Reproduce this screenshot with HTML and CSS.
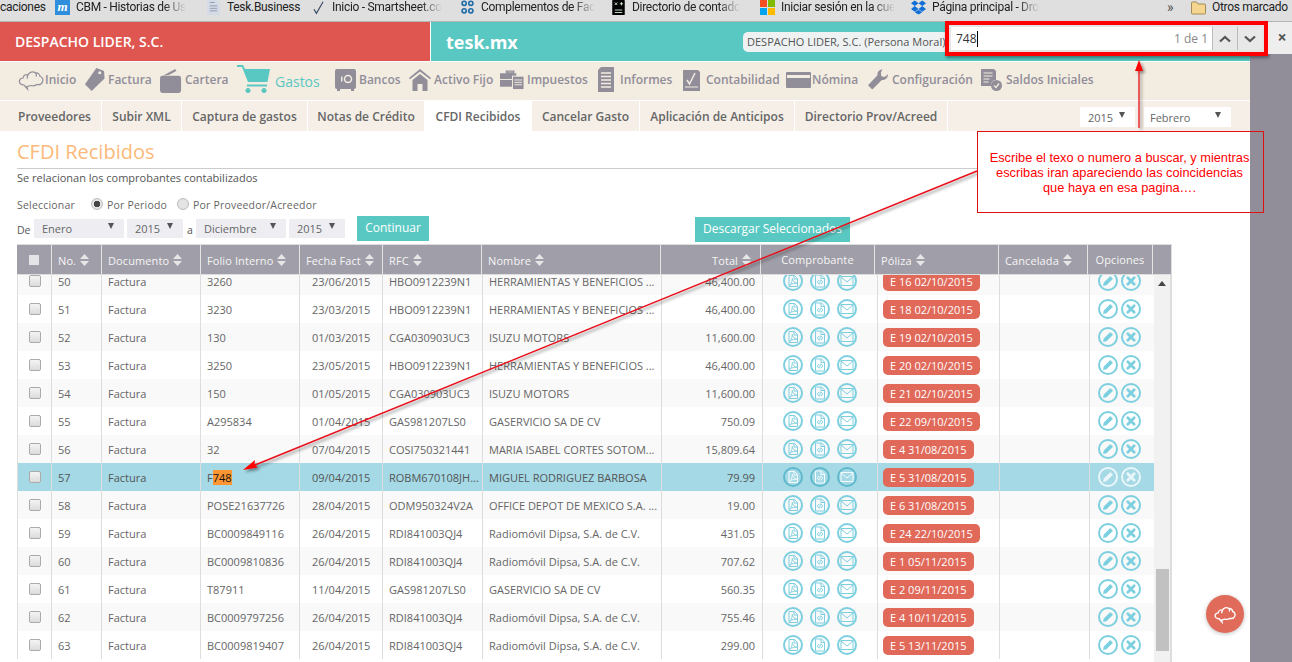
FILE: index.html
```html
<!DOCTYPE html>
<html lang="es">
<head>
<meta charset="utf-8">
<title>CFDI Recibidos</title>
<link rel="stylesheet" href="styles.css">
</head>
<body>
<svg class="defs" width="0" height="0" aria-hidden="true">
  <symbol id="i-pdf" viewBox="0 0 20 20"><circle cx="10" cy="10" r="9" fill="none" stroke="currentColor" stroke-width="2"/><path class="inner" d="M6 4.500h5.500l3 3V15.500H6z M11 4.500V8h3.500" fill="none"/><path class="inner" d="M6.500 14.500C9 12 9.500 8.500 9.300 7.500 10 10 11.500 12 14 12.200 11.500 12 8.500 12.500 6.500 14.500z" fill="none" stroke-width=".9"/></symbol>
  <symbol id="i-xml" viewBox="0 0 20 20"><circle cx="10" cy="10" r="9" fill="none" stroke="currentColor" stroke-width="2"/><path class="inner" d="M5.500 4h6l3 3v9h-9z M11 4v3.500h3.500" fill="none"/><path class="inner" d="M8.800 9 7.300 11l1.500 2M11.200 9l1.500 2-1.500 2M10.500 8.500l-1 5" fill="none" stroke-width=".9"/></symbol>
  <symbol id="i-mail" viewBox="0 0 20 20"><circle cx="10" cy="10" r="9" fill="none" stroke="currentColor" stroke-width="2"/><rect class="inner" x="4" y="5.500" width="12" height="9" fill="none"/><path class="inner" d="M4 6l6 5 6-5" fill="none"/></symbol>
  <symbol id="i-edit" viewBox="0 0 20 20"><circle cx="10" cy="10" r="9" fill="none" stroke="currentColor" stroke-width="2"/><path d="M5 15l.8-3.500 6.500-6.500 2.700 2.700-6.500 6.500z" fill="currentColor"/></symbol>
  <symbol id="i-x" viewBox="0 0 20 20"><circle cx="10" cy="10" r="9" fill="none" stroke="currentColor" stroke-width="2"/><path d="M6.800 6.800l6.400 6.400M13.200 6.800l-6.400 6.400" fill="none" stroke="currentColor" stroke-width="2.800" stroke-linecap="round"/></symbol>
  <symbol id="i-sort" viewBox="0 0 9 12"><path d="M4.500 0 9 5H0zM0 7h9l-4.500 5z" fill="currentColor"/></symbol>
  <symbol id="i-cloud" viewBox="0 0 26 22"><path d="M6 16C2.500 16 1 14 1.500 11.500 2 9.500 4 9 5 9 5.500 6 8 5 10 6 11 3 15 2 17.500 4 19.500 3.500 22 5 22 7.500 24.500 8 25.500 10.500 24.500 13 23.500 15.500 21 16 19 15.500 17 17 15 17 13 16.500L9 17.500 9.500 20 6 16zM10 6C9 7.500 9 8.500 9.500 9.500M17.500 4C18.500 5 18.500 6.500 18 7.500" fill="none" stroke="currentColor" stroke-width="1.200"/></symbol>
  <symbol id="i-tag" viewBox="0 0 22 26"><path d="M13 1l8 3 .5 8L8 25 1 18z" fill="currentColor"/><circle cx="16.500" cy="6" r="1.600" fill="#f3ece1"/></symbol>
  <symbol id="i-wallet" viewBox="0 0 23 27"><path d="M3 8 16 1l2 5z" fill="currentColor"/><path d="M6 9 17 3l2 4z" fill="#f3ece1"/><rect x="0" y="8" width="22" height="18" rx="2.500" fill="currentColor"/></symbol>
  <symbol id="i-cart" viewBox="0 0 33 30"><path d="M0 1h6l2 4h25l-2.500 13H11L5 3H0z" fill="currentColor"/><path d="M10 20.500h20v2H10z" fill="currentColor"/><circle cx="11" cy="26.500" r="2.500" fill="currentColor"/><circle cx="27" cy="26.500" r="2.500" fill="currentColor"/></symbol>
  <symbol id="i-safe" viewBox="0 0 21 22"><rect width="21" height="20" rx="2" fill="currentColor"/><path d="M2 20h3v2H2zM16 20h3v2h-3z" fill="currentColor"/><circle cx="13" cy="10" r="3.500" fill="none" stroke="#f3ece1" stroke-width="1.500"/><path d="M6 7.500h1.500v5H6z" fill="#f3ece1"/></symbol>
  <symbol id="i-home" viewBox="0 0 22 22"><path d="M11 0 22 9l-1 1.200L11 2.400 1 10.200 0 9z" fill="currentColor"/><path d="M3.500 11 11 5l7.500 6v11h-5v-7h-5v7h-5z" fill="currentColor"/></symbol>
  <symbol id="i-brief" viewBox="0 0 25 21"><path d="M7 3h7v2H7zM6 1h9v3h-1.500V2.500h-6V4H6z" fill="currentColor"/><rect y="4" width="17" height="14" fill="currentColor"/><path d="M0 10h17v1H0z" fill="#f3ece1"/><rect x="13" y="7" width="12" height="14" fill="currentColor" stroke="#f3ece1"/><path d="M15 11h8M15 13.500h8M15 16h8" stroke="#f3ece1"/></symbol>
  <symbol id="i-doc" viewBox="0 0 16 25"><path d="M3 0h13v25H0V3z" fill="currentColor"/><path d="M3 6h10M3 9.500h10M3 13h10M3 16.500h10M3 20h10" stroke="#f3ece1" stroke-width="1.300"/></symbol>
  <symbol id="i-acc" viewBox="0 0 17 22"><path d="M0 1h15l2 2v19H0z" fill="currentColor"/><path d="M4 11l2.500 4L12 4" fill="none" stroke="#f3ece1" stroke-width="1.500"/><path d="M2 18h13" stroke="#f3ece1"/></symbol>
  <symbol id="i-card" viewBox="0 0 25 16"><rect width="25" height="16" rx="1" fill="currentColor"/><path d="M1 3h23v3H1z" fill="#f3ece1"/></symbol>
  <symbol id="i-wrench" viewBox="0 0 21 21"><path d="M15 0c-3 0-5.500 2.500-5 6L0 16.500 4.500 21 14.500 11c3.500.5 6.500-2 6.500-6l-3.500 3L14 7 13.500 3.500z" fill="currentColor"/></symbol>
  <symbol id="i-saldo" viewBox="0 0 21 22"><path d="M0 0h13l2 2v9c-3 0-5 2-5 6H0z" fill="currentColor"/><path d="M2.500 4h9M2.500 7h9M2.500 10h6M2.500 13h5" stroke="#f3ece1"/><circle cx="15.500" cy="16.500" r="5.500" fill="currentColor"/><path d="M13 16.500l2 2 3-4" fill="none" stroke="#f3ece1" stroke-width="1.300"/></symbol>
  <symbol id="i-chat" viewBox="0 0 26 22"><path d="M6 16C2.500 16 1 14 1.500 11.500 2 9.500 4 9 5 9 5.500 6 8 5 10 6 11 3 15 2 17.500 4 19.500 3.500 22 5 22 7.500 24.500 8 25.500 10.500 24.500 13 23.500 15.500 21 16 19 15.500 17 17 15 17 13 16.500L9 17.500 9.500 20 6 16zM10 6C9 7.500 9 8.500 9.500 9.500M17.500 4C18.500 5 18.500 6.500 18 7.500" fill="none" stroke="currentColor" stroke-width="1.600"/></symbol>
</svg>

<div class="bookmarks">
  <div class="bm bm-first"><span class="bm-end">caciones</span></div>
  <div class="bm"><span class="bi-m">m</span><span class="bm-text">CBM - Historias de Us</span></div>
  <div class="bm"><svg class="bsvg" viewBox="0 0 15 18"><path d="M0 0h11l4 4v14H0z" fill="#d5dbe6"/><path d="M3 3h6M3 7h9M3 10h9M3 13h9" stroke="#8794aa"/></svg><span class="bm-end">Tesk.Business</span></div>
  <div class="bm"><svg class="bsvg" viewBox="0 0 15 18"><path d="M2 11l3 5L13 2" fill="none" stroke="#33475f" stroke-width="1.300"/></svg><span class="bm-text">Inicio - Smartsheet.co</span></div>
  <div class="bm"><svg class="bsvg" viewBox="0 0 15 18"><g fill="none" stroke="#1f6ea8" stroke-width="2"><circle cx="3.500" cy="4" r="2.500"/><circle cx="11.500" cy="4" r="2.500"/><circle cx="3.500" cy="13" r="2.500"/><circle cx="11.500" cy="13" r="2.500"/></g></svg><span class="bm-text">Complementos de Fac</span></div>
  <div class="bm"><svg class="bsvg" viewBox="0 0 15 18"><rect width="15" height="18" rx="1" fill="#000"/><path d="M3 3l3 3M6 3 3 6M9 4.500h4M11 2.500v4M3 12h9M3 15h9" stroke="#e8ffe8"/></svg><span class="bm-text">Directorio de contado</span></div>
  <div class="bm"><svg class="bsvg" viewBox="0 0 15 15"><path d="M0 0h7v7H0z" fill="#f25022"/><path d="M8 0h7v7H8z" fill="#7fba00"/><path d="M0 8h7v7H0z" fill="#00a4ef"/><path d="M8 8h7v7H8z" fill="#ffb900"/></svg><span class="bm-text">Iniciar sesión en la cue</span></div>
  <div class="bm"><svg class="bsvg" viewBox="0 0 16 15"><path d="M4 0 8 3 4 6 0 3zM12 0l4 3-4 3-4-3zM4 6l4 3-4 3-4-3zM12 6l4 3-4 3-4-3zM4 12.500 8 10l4 2.500L8 15z" fill="#0f6fd6"/></svg><span class="bm-text">Página principal - Dro</span></div>
  <div class="bm bm-more">»</div>
  <div class="bm bm-folder"><svg class="bsvg" viewBox="0 0 15 14"><path d="M.5 2.500a1 1 0 0 1 1-1h4l1.500 2h6.500a1 1 0 0 1 1 1v8a1 1 0 0 1-1 1h-12a1 1 0 0 1-1-1z" fill="#f6d68f" stroke="#a58b57"/></svg><span class="bm-end">Otros marcado</span></div>
</div>

<div class="viewport">
  <main class="app">
    <header class="brand">
      <div class="brand-firm">DESPACHO LIDER, S.C.</div>
      <div class="brand-tesk">
        <span class="logo">tesk.mx</span>
        <span class="pill">DESPACHO LIDER, S.C. (Persona Moral)</span>
      </div>
    </header>

    <nav class="nav">
      <a class="nav-item nav-tight"><svg class="ni ni-cloud"><use href="#i-cloud"/></svg>Inicio</a>
      <a class="nav-item"><svg class="ni ni-tag"><use href="#i-tag"/></svg>Factura</a>
      <a class="nav-item"><svg class="ni ni-wallet"><use href="#i-wallet"/></svg>Cartera</a>
      <a class="nav-item nav-active"><svg class="ni ni-cart"><use href="#i-cart"/></svg>Gastos</a>
      <a class="nav-item"><svg class="ni ni-safe"><use href="#i-safe"/></svg>Bancos</a>
      <a class="nav-item"><svg class="ni ni-home"><use href="#i-home"/></svg>Activo Fijo</a>
      <a class="nav-item"><svg class="ni ni-brief"><use href="#i-brief"/></svg>Impuestos</a>
      <a class="nav-item"><svg class="ni ni-doc"><use href="#i-doc"/></svg>Informes</a>
      <a class="nav-item"><svg class="ni ni-acc"><use href="#i-acc"/></svg>Contabilidad</a>
      <a class="nav-item nav-tight"><svg class="ni ni-card"><use href="#i-card"/></svg>Nómina</a>
      <a class="nav-item nav-wide"><svg class="ni ni-wrench"><use href="#i-wrench"/></svg>Configuración</a>
      <a class="nav-item nav-wide"><svg class="ni ni-saldo"><use href="#i-saldo"/></svg>Saldos Iniciales</a>
    </nav>

    <div class="subnav">
      <a class="tab">Proveedores</a>
      <a class="tab">Subir XML</a>
      <a class="tab">Captura de gastos</a>
      <a class="tab">Notas de Crédito</a>
      <a class="tab tab-on">CFDI Recibidos</a>
      <a class="tab">Cancelar Gasto</a>
      <a class="tab">Aplicación de Anticipos</a>
      <a class="tab">Directorio Prov/Acreed</a>
      <div class="period">
        <span class="sel sel-y">2015<i class="caret"></i></span>
        <span class="sel sel-m">Febrero<i class="caret"></i></span>
      </div>
    </div>

    <section class="content">
      <h1 class="title">CFDI Recibidos</h1>
      <p class="lead">Se relacionan los comprobantes contabilizados</p>
      <div class="radios">
        <span class="radios-label">Seleccionar</span>
        <i class="radio radio-on"></i><span class="radio-text">Por Periodo</span>
        <i class="radio"></i><span>Por Proveedor/Acreedor</span>
      </div>
      <div class="filters">
        <span class="f-de">De</span>
        <span class="sel f-month">Enero<i class="caret"></i></span>
        <span class="sel f-year">2015<i class="caret"></i></span>
        <span class="f-a">a</span>
        <span class="sel f-month">Diciembre<i class="caret"></i></span>
        <span class="sel f-year">2015<i class="caret"></i></span>
        <a class="btn btn-go">Continuar</a>
        <a class="btn btn-dl">Descargar Seleccionados</a>
      </div>

      <div class="table">
        <div class="thead">
          <span class="cell-chk"><i class="chk chk-head"></i></span>
          <span>No.<svg class="sort"><use href="#i-sort"/></svg></span>
          <span>Documento<svg class="sort"><use href="#i-sort"/></svg></span>
          <span>Folio Interno<svg class="sort"><use href="#i-sort"/></svg></span>
          <span>Fecha Fact<svg class="sort"><use href="#i-sort"/></svg></span>
          <span>RFC<svg class="sort"><use href="#i-sort"/></svg></span>
          <span>Nombre<svg class="sort"><use href="#i-sort"/></svg></span>
          <span class="th-end">Total<svg class="sort"><use href="#i-sort"/></svg></span>
          <span class="th-mid">Comprobante</span>
          <span>Póliza<svg class="sort"><use href="#i-sort"/></svg></span>
          <span>Cancelada<svg class="sort"><use href="#i-sort"/></svg></span>
          <span class="th-mid">Opciones</span>
          <span></span>
        </div>
        <div class="tbody-wrap">
          <div class="tbody">
            <div class="row"><span class="cell-chk"><i class="chk"></i></span><span>50</span><span>Factura</span><span>3260</span><span class="date">23/06/2015</span><span>HBO0912239N1</span><span>HERRAMIENTAS Y BENEFICIOS ...</span><span class="num">46,400.00</span><span class="acts"><svg class="ai"><use href="#i-pdf"/></svg><svg class="ai"><use href="#i-xml"/></svg><svg class="ai"><use href="#i-mail"/></svg></span><span><b class="badge">E 16 02/10/2015</b></span><span></span><span class="opts"><svg class="ai"><use href="#i-edit"/></svg><svg class="ai"><use href="#i-x"/></svg></span></div>
            <div class="row"><span class="cell-chk"><i class="chk"></i></span><span>51</span><span>Factura</span><span>3230</span><span class="date">23/03/2015</span><span>HBO0912239N1</span><span>HERRAMIENTAS Y BENEFICIOS ...</span><span class="num">46,400.00</span><span class="acts"><svg class="ai"><use href="#i-pdf"/></svg><svg class="ai"><use href="#i-xml"/></svg><svg class="ai"><use href="#i-mail"/></svg></span><span><b class="badge">E 18 02/10/2015</b></span><span></span><span class="opts"><svg class="ai"><use href="#i-edit"/></svg><svg class="ai"><use href="#i-x"/></svg></span></div>
            <div class="row"><span class="cell-chk"><i class="chk"></i></span><span>52</span><span>Factura</span><span>130</span><span class="date">01/03/2015</span><span>CGA030903UC3</span><span>ISUZU MOTORS</span><span class="num">11,600.00</span><span class="acts"><svg class="ai"><use href="#i-pdf"/></svg><svg class="ai"><use href="#i-xml"/></svg><svg class="ai"><use href="#i-mail"/></svg></span><span><b class="badge">E 19 02/10/2015</b></span><span></span><span class="opts"><svg class="ai"><use href="#i-edit"/></svg><svg class="ai"><use href="#i-x"/></svg></span></div>
            <div class="row"><span class="cell-chk"><i class="chk"></i></span><span>53</span><span>Factura</span><span>3250</span><span class="date">23/05/2015</span><span>HBO0912239N1</span><span>HERRAMIENTAS Y BENEFICIOS ...</span><span class="num">46,400.00</span><span class="acts"><svg class="ai"><use href="#i-pdf"/></svg><svg class="ai"><use href="#i-xml"/></svg><svg class="ai"><use href="#i-mail"/></svg></span><span><b class="badge">E 20 02/10/2015</b></span><span></span><span class="opts"><svg class="ai"><use href="#i-edit"/></svg><svg class="ai"><use href="#i-x"/></svg></span></div>
            <div class="row"><span class="cell-chk"><i class="chk"></i></span><span>54</span><span>Factura</span><span>150</span><span class="date">01/05/2015</span><span>CGA030903UC3</span><span>ISUZU MOTORS</span><span class="num">11,600.00</span><span class="acts"><svg class="ai"><use href="#i-pdf"/></svg><svg class="ai"><use href="#i-xml"/></svg><svg class="ai"><use href="#i-mail"/></svg></span><span><b class="badge">E 21 02/10/2015</b></span><span></span><span class="opts"><svg class="ai"><use href="#i-edit"/></svg><svg class="ai"><use href="#i-x"/></svg></span></div>
            <div class="row"><span class="cell-chk"><i class="chk"></i></span><span>55</span><span>Factura</span><span>A295834</span><span class="date">01/04/2015</span><span>GAS981207LS0</span><span>GASERVICIO SA DE CV</span><span class="num">750.09</span><span class="acts"><svg class="ai"><use href="#i-pdf"/></svg><svg class="ai"><use href="#i-xml"/></svg><svg class="ai"><use href="#i-mail"/></svg></span><span><b class="badge">E 22 09/10/2015</b></span><span></span><span class="opts"><svg class="ai"><use href="#i-edit"/></svg><svg class="ai"><use href="#i-x"/></svg></span></div>
            <div class="row"><span class="cell-chk"><i class="chk"></i></span><span>56</span><span>Factura</span><span>32</span><span class="date">07/04/2015</span><span>COSI750321441</span><span>MARIA ISABEL CORTES SOTOM...</span><span class="num">15,809.64</span><span class="acts"><svg class="ai"><use href="#i-pdf"/></svg><svg class="ai"><use href="#i-xml"/></svg><svg class="ai"><use href="#i-mail"/></svg></span><span><b class="badge">E 4 31/08/2015</b></span><span></span><span class="opts"><svg class="ai"><use href="#i-edit"/></svg><svg class="ai"><use href="#i-x"/></svg></span></div>
            <div class="row row-hit"><span class="cell-chk"><i class="chk"></i></span><span>57</span><span>Factura</span><span>F<mark class="match">748</mark></span><span class="date">09/04/2015</span><span>ROBM670108JH...</span><span>MIGUEL RODRIGUEZ BARBOSA</span><span class="num">79.99</span><span class="acts"><svg class="ai"><use href="#i-pdf"/></svg><svg class="ai"><use href="#i-xml"/></svg><svg class="ai"><use href="#i-mail"/></svg></span><span><b class="badge">E 5 31/08/2015</b></span><span></span><span class="opts"><svg class="ai"><use href="#i-edit"/></svg><svg class="ai"><use href="#i-x"/></svg></span></div>
            <div class="row"><span class="cell-chk"><i class="chk"></i></span><span>58</span><span>Factura</span><span>POSE21637726</span><span class="date">28/04/2015</span><span>ODM950324V2A</span><span>OFFICE DEPOT DE MEXICO S.A. ...</span><span class="num">19.00</span><span class="acts"><svg class="ai"><use href="#i-pdf"/></svg><svg class="ai"><use href="#i-xml"/></svg><svg class="ai"><use href="#i-mail"/></svg></span><span><b class="badge">E 6 31/08/2015</b></span><span></span><span class="opts"><svg class="ai"><use href="#i-edit"/></svg><svg class="ai"><use href="#i-x"/></svg></span></div>
            <div class="row"><span class="cell-chk"><i class="chk"></i></span><span>59</span><span>Factura</span><span>BC0009849116</span><span class="date">26/04/2015</span><span>RDI841003QJ4</span><span>Radiomóvil Dipsa, S.A. de C.V.</span><span class="num">431.05</span><span class="acts"><svg class="ai"><use href="#i-pdf"/></svg><svg class="ai"><use href="#i-xml"/></svg><svg class="ai"><use href="#i-mail"/></svg></span><span><b class="badge">E 24 22/10/2015</b></span><span></span><span class="opts"><svg class="ai"><use href="#i-edit"/></svg><svg class="ai"><use href="#i-x"/></svg></span></div>
            <div class="row"><span class="cell-chk"><i class="chk"></i></span><span>60</span><span>Factura</span><span>BC0009810836</span><span class="date">26/04/2015</span><span>RDI841003QJ4</span><span>Radiomóvil Dipsa, S.A. de C.V.</span><span class="num">707.62</span><span class="acts"><svg class="ai"><use href="#i-pdf"/></svg><svg class="ai"><use href="#i-xml"/></svg><svg class="ai"><use href="#i-mail"/></svg></span><span><b class="badge">E 1 05/11/2015</b></span><span></span><span class="opts"><svg class="ai"><use href="#i-edit"/></svg><svg class="ai"><use href="#i-x"/></svg></span></div>
            <div class="row"><span class="cell-chk"><i class="chk"></i></span><span>61</span><span>Factura</span><span>T87911</span><span class="date">11/04/2015</span><span>GAS981207LS0</span><span>GASERVICIO SA DE CV</span><span class="num">560.35</span><span class="acts"><svg class="ai"><use href="#i-pdf"/></svg><svg class="ai"><use href="#i-xml"/></svg><svg class="ai"><use href="#i-mail"/></svg></span><span><b class="badge">E 2 09/11/2015</b></span><span></span><span class="opts"><svg class="ai"><use href="#i-edit"/></svg><svg class="ai"><use href="#i-x"/></svg></span></div>
            <div class="row"><span class="cell-chk"><i class="chk"></i></span><span>62</span><span>Factura</span><span>BC0009797256</span><span class="date">26/04/2015</span><span>RDI841003QJ4</span><span>Radiomóvil Dipsa, S.A. de C.V.</span><span class="num">755.46</span><span class="acts"><svg class="ai"><use href="#i-pdf"/></svg><svg class="ai"><use href="#i-xml"/></svg><svg class="ai"><use href="#i-mail"/></svg></span><span><b class="badge">E 4 10/11/2015</b></span><span></span><span class="opts"><svg class="ai"><use href="#i-edit"/></svg><svg class="ai"><use href="#i-x"/></svg></span></div>
            <div class="row"><span class="cell-chk"><i class="chk"></i></span><span>63</span><span>Factura</span><span>BC0009819407</span><span class="date">26/04/2015</span><span>RDI841003QJ4</span><span>Radiomóvil Dipsa, S.A. de C.V.</span><span class="num">299.00</span><span class="acts"><svg class="ai"><use href="#i-pdf"/></svg><svg class="ai"><use href="#i-xml"/></svg><svg class="ai"><use href="#i-mail"/></svg></span><span><b class="badge">E 5 13/11/2015</b></span><span></span><span class="opts"><svg class="ai"><use href="#i-edit"/></svg><svg class="ai"><use href="#i-x"/></svg></span></div>
          </div>
          <div class="track"><i class="track-up"></i><i class="thumb"></i></div>
        </div>
      </div>
    </section>
  </main>
  <div class="dim"></div>
</div>

<a class="fab"><svg class="fab-icon"><use href="#i-chat"/></svg></a>

<div class="findbar">
  <div class="find-box">
    <span class="find-input"><span class="find-q">748</span><i class="find-caret"></i></span>
    <span class="find-count">1 de 1</span>
    <span class="find-btn"><svg viewBox="0 0 12 8" class="find-chev"><path d="M1 6.500 6 2l5 4.500" fill="none" stroke="#555" stroke-width="2.200"/></svg></span>
    <span class="find-btn"><svg viewBox="0 0 12 8" class="find-chev"><path d="M1 1.500 6 6l5-4.500" fill="none" stroke="#555" stroke-width="2.200"/></svg></span>
  </div>
  <span class="find-close">×</span>
</div>

<svg class="arrows" viewBox="0 0 1292 662" aria-hidden="true">
  <defs><filter id="sh" x="-5%" y="-20%" width="110%" height="140%"><feDropShadow dx="2" dy="2" stdDeviation="1.500" flood-color="#000" flood-opacity=".45"/></filter></defs>
  <g filter="url(#sh)">
    <path d="M1139 128V70" stroke="#e8101a" stroke-width="1.300" fill="none"/>
    <path d="M1139 60l4 11h-8z" fill="#f00"/>
    <path d="M977 171 255 465" stroke="#e8101a" stroke-width="1.400" fill="none"/>
    <path d="M243 470l12-10-.5 4 3 3.500z" fill="#f00"/>
  </g>
</svg>

<div class="callout">Escribe el texo o numero a buscar, y mientras escribas iran apareciendo las coincidencias que haya en esa pagina….</div>
</body>
</html>
```
FILE: styles.css
```css
* { box-sizing: border-box; }
html, body { margin: 0; height: 662px; overflow: hidden; }
body { font-family: "Open Sans", "Liberation Sans", sans-serif; font-size: 11px; color: #555; background: #fff; position: relative; }
.defs { position: absolute; }
a { cursor: default; }

/* bookmarks */
.bookmarks { height: 22px; background: #dfdfdf; border-bottom: 1px solid #b5b5b5; display: grid; grid-template-columns: 55px 151px 105px 149px 151px 149px 151px 249px 31px 101px; font-family: Roboto, "Liberation Sans", sans-serif; font-size: 12px; letter-spacing: -.3px; color: #222; overflow: hidden; }
.bm { display: flex; align-items: center; gap: 6px; height: 14px; min-width: 0; line-height: 14px; white-space: nowrap; }
.bm-text { white-space: nowrap; -webkit-mask-image: linear-gradient(90deg, #000 80%, transparent); mask-image: linear-gradient(90deg, #000 80%, transparent); }
.bi-m { width: 15px; height: 15px; flex: none; background: #2f8fdc; color: #fff; font: italic bold 13px/14px "Liberation Serif", serif; text-align: center; }
.bsvg { width: 15px; height: 15px; flex: none; }
.bm-more { font-size: 14px; color: #555; padding-left: 7px; }
.bm-end { white-space: nowrap; }

.viewport { display: flex; height: 640px; }
.app { width: 1250px; flex: none; background: #fff; overflow: hidden; }
.dim { flex: 1; background: #918e99; }

/* brand bar */
.brand { display: grid; grid-template-columns: 431px 1fr; height: 40px; border-bottom: 1px solid #fff; }
.brand-firm { background: #df5650; color: #fff; font-size: 14px; font-weight: 600; line-height: 39px; padding-left: 15px; border-right: 1px solid #fff; }
.brand-tesk { background: #5ac8c2; display: flex; align-items: center; padding-left: 15px; }
.logo { color: #fff; font-size: 18px; font-weight: 700; width: 297px; }
.pill { background: #eef2f2; border-radius: 5px; height: 20px; line-height: 20px; padding: 0 4px; font-size: 11px; color: #555; white-space: nowrap; margin-top: 1px; }

/* nav */
.nav { display: grid; grid-template-columns: 66px 76px 77px 98px 74px 91px 98px 85px 103px 82px 113px auto; padding: 0 0 3px 18px; height: 39px; background: #f3ece1; border-bottom: 1px solid #fff; }
.nav-item { display: flex; align-items: center; gap: 3px; color: #918e99; font-size: 12px; font-weight: 600; white-space: nowrap; }
.nav-tight { gap: 1px; }
.nav-wide { gap: 4px; }
.nav-active { color: #5ac8c2; font-size: 14px; font-weight: 400; gap: 5px; padding-top: 3px; }
.nav-active .ni { margin-top: -4px; }
.ni { color: #918e99; flex: none; }
.nav-active .ni { color: #5ac8c2; }
.ni-cloud { width: 26px; height: 22px; }
.ni-tag { width: 21px; height: 25px; }
.ni-wallet { width: 22px; height: 26px; margin-top: 2px; }
.ni-cart { width: 33px; height: 30px; }
.ni-safe { width: 21px; height: 22px; }
.ni-home { width: 22px; height: 22px; }
.ni-brief { width: 24px; height: 21px; }
.ni-doc { width: 16px; height: 25px; margin-right: 3px; }
.ni-acc { width: 17px; height: 22px; margin-right: 3px; }
.ni-card { width: 25px; height: 16px; }
.ni-wrench { width: 20px; height: 21px; }
.ni-saldo { width: 21px; height: 22px; }

/* subnav */
.subnav { display: grid; grid-template-columns: 94px 80px 126px 117px 107px 108px 155px 153px 1fr; padding-left: 8px; height: 30px; background: #f5efe7; }
.tab { display: flex; align-items: center; justify-content: center; font-size: 12px; font-weight: 600; color: #666; border-right: 1px solid #fff; white-space: nowrap; }
.tab-on { background: #fff; }
.period { display: flex; gap: 9px; padding: 6px 0 0 132px; }
.sel { display: flex; align-items: center; justify-content: space-between; background: #fff; height: 20px; padding: 0 10px 0 8px; font-size: 11px; color: #666; }
.sel-y { width: 55px; }
.sel-m { width: 87px; padding-left: 6px; }
.caret { width: 0; height: 0; border: 3.500px solid transparent; border-top: 6px solid #555; border-bottom: 0; margin-top: -5px; }

/* content */
.content { padding: 0 0 0 17px; }
.title { margin: 0; font-size: 20px; font-weight: 400; color: #fdb97a; line-height: 33px; padding-top: 4px; height: 38px; border-bottom: 1px solid #ccc; }
.lead { margin: 0; height: 17px; line-height: 17px; font-size: 11px; color: #555; }
.radios { display: flex; align-items: center; margin-top: 11px; height: 16px; font-size: 10.500px; color: #666; letter-spacing: .2px; }
.radios-label { width: 74px; }
.radio { width: 12px; height: 12px; border-radius: 50%; background: #e4e4e4; border: 1px solid #bbb; margin: -3px 4px 0 0; flex: none; }
.radio-on { background: radial-gradient(circle, #444 0 3px, #e4e4e4 3.500px); }
.radio-text { width: 70px; }
.filters { display: flex; align-items: center; height: 26px; margin-top: 2px; width: 833px; }
.f-de { width: 17px; padding-top: 3px; font-size: 10.500px; }
.f-a { width: 13px; padding-left: 4px; padding-top: 3px; font-size: 10.500px; }
.filters .sel { background: #eeeef2; height: 19px; margin-top: 1px; }
.f-month { width: 90px; margin-right: 3px; }
.f-year { width: 56px; }
.btn { display: flex; align-items: center; justify-content: center; background: #5ac8c2; color: #fff; font-size: 12px; height: 25px; padding-bottom: 2px; }
.btn-go { width: 72px; margin-left: 12px; }
.btn-dl { width: 155px; margin: 2px 0 0 auto; }

/* table */
.table { width: 1155px; margin-top: 3px; }
.thead { display: grid; grid-template-columns: 35px 50px 99px 99px 83px 99px 179px 100px 114px 124px 89px 65px 19px; height: 31px; background: #a09ea8; border: solid #ddd; border-width: 1px 1px 1px 0; color: #f5f5f5; font-size: 11px; }
.thead > span { display: flex; align-items: center; gap: 4px; padding: 1px 0 0 6px; border-right: 1px solid #e5e5e5; white-space: nowrap; letter-spacing: .1px; }
.thead > span:last-child { border-right: 0; }
.thead > .cell-chk { padding: 0; justify-content: center; }
.thead > .th-end { justify-content: flex-end; padding-right: 9px; }
.thead > .th-mid { justify-content: center; padding: 0 0 1px; }
.sort { width: 9px; height: 12px; color: #e6e6e6; flex: none; }
.tbody-wrap { display: flex; height: 387px; overflow: hidden; border-right: 2px solid #ddd; }
.tbody { width: 1137px; flex: none; margin-top: -8px; }
.row { display: grid; grid-template-columns: 35px 50px 99px 99px 83px 100px 179px 101px 115px 122px 90px 64px; height: 28px; font-size: 11px; color: #666; background: #fff; }
.row:nth-child(odd) { background: #f9f9f9; }
.row.row-hit { background: #a4d9e5; color: #555; }
.row > span { display: flex; align-items: center; padding-left: 6px; border-right: 1px solid #ddd; white-space: nowrap; overflow: hidden; }
.row > span:first-child { border-left: 1px solid #ddd; }
.row > .cell-chk { padding: 0; justify-content: center; }
.row > .date { padding-left: 12px; }
.row > .num { justify-content: flex-end; padding: 0 7px 0 0; }
.row > .acts { padding-left: 20px; gap: 7px; }
.row > .opts { padding-left: 8px; gap: 3px; border-right: 0; }
.cell-chk { display: flex; align-items: center; justify-content: center; }
.chk { display: block; width: 12px; height: 12px; border: 1px solid #aaa; border-radius: 2px; background: linear-gradient(#f4f4f4, #dcdcdc); }
.chk-head { background: #e4e4e6; border: 0; border-radius: 0; width: 10px; height: 10px; }
.ai { width: 20px; height: 20px; color: #7ccfdf; flex: none; }
.inner { stroke: var(--inner, currentColor); }
.row-hit .acts { --inner: #f2fbfd; }
.row-hit .acts .ai { color: #5fb9cc; }
.row-hit .opts .ai { color: #eaf6f9; }
.badge { display: inline-block; background: #e0695a; color: #fff; font-weight: 400; font-size: 11px; line-height: 19px; padding: 0 7px; border-radius: 5px; margin-left: -1px; }
.match { background: #ff9632; color: #111; }
.track { flex: 1; background: #f1f1f1; display: flex; flex-direction: column; align-items: center; }
.track-up { width: 0; height: 0; border: 4px solid transparent; border-bottom: 5px solid #444; border-top: 0; margin-top: 6px; }
.thumb { width: 13px; height: 82px; background: #c1c1c1; margin-top: 283px; }

/* floating */
.fab { position: absolute; left: 1206px; top: 595px; width: 38px; height: 38px; border-radius: 50%; background: #e06b5b; box-shadow: 0 1px 4px rgba(0,0,0,.25); display: flex; align-items: center; justify-content: center; }
.fab-icon { width: 22px; height: 19px; color: #fff; }

.findbar { position: absolute; left: 945px; top: 21px; width: 347px; height: 35px; display: flex; }
.find-box { width: 323px; height: 35px; border: 4px solid #f00; background: #e4e4e4; display: flex; align-items: center; padding: 2px; box-shadow: 1px 2px 3px rgba(0,0,0,.4); flex: none; }
.find-input { flex: 1; display: flex; align-items: center; height: 100%; background: #fff; padding-left: 5px; font-size: 12px; color: #333; }
.find-caret { width: 1px; height: 16px; background: #000; }
.find-count { background: #fff; height: 100%; display: flex; align-items: center; padding-right: 4px; font-size: 12px; color: #888; }
.find-btn { width: 25px; height: 100%; border-left: 1px solid #bbb; display: flex; align-items: center; justify-content: center; background: #e8e8e8; }
.find-chev { width: 12px; height: 8px; }
.find-close { flex: 1; background: #eee; height: 32px; margin-top: 1px; padding-left: 4px; color: #555; font-size: 16px; font-weight: 700; line-height: 31px; text-align: center; }

.arrows { position: absolute; left: 0; top: 0; width: 1292px; height: 662px; pointer-events: none; }
.callout { position: absolute; left: 977px; top: 131px; width: 287px; height: 82px; border: 1px solid #e01010; background: linear-gradient(90deg, #fff 272px, transparent 272px); color: #f00; font-family: "Liberation Sans", Arial, sans-serif; font-size: 12.800px; line-height: 15px; text-align: center; padding: 18px 13px 0 11px; }
```
